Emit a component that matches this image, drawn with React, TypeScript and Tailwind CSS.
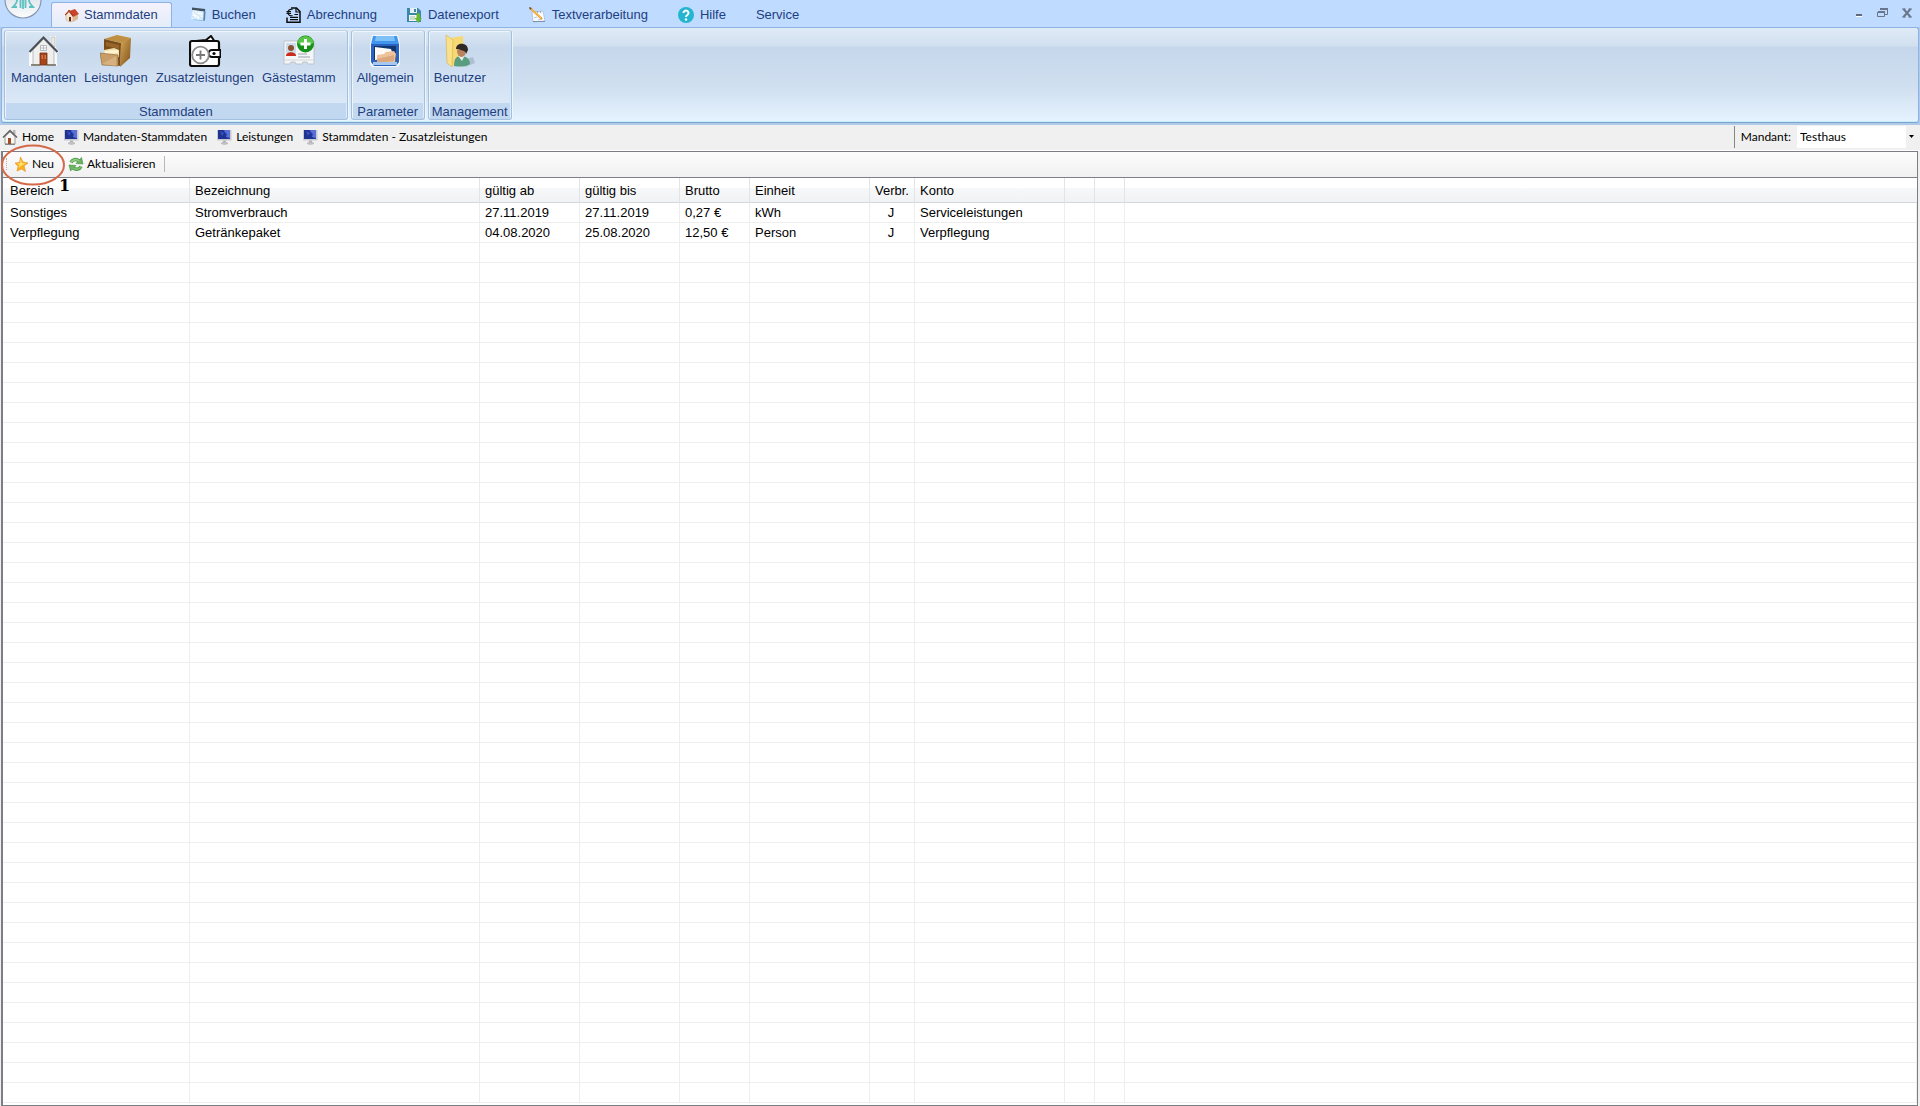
import { useState, type ReactNode } from "react";

/* ===================== TYPES ===================== */
interface Leistung {
  bereich: string;
  bezeichnung: string;
  ab: string;
  bis: string;
  brutto: string;
  einheit: string;
  verbr: string;
  konto: string;
}

interface RibbonItem {
  label: string;
  icon: ReactNode;
}

/* ===================== DATA ===================== */
const ROWS: Leistung[] = [
  { bereich: "Sonstiges", bezeichnung: "Stromverbrauch", ab: "27.11.2019", bis: "27.11.2019", brutto: "0,27 €", einheit: "kWh", verbr: "J", konto: "Serviceleistungen" },
  { bereich: "Verpflegung", bezeichnung: "Getränkepaket", ab: "04.08.2020", bis: "25.08.2020", brutto: "12,50 €", einheit: "Person", verbr: "J", konto: "Verpflegung" },
];

const COLUMNS = [
  { label: "Bereich", width: "w-[187px]" },
  { label: "Bezeichnung", width: "w-[290px]" },
  { label: "gültig ab", width: "w-[100px]" },
  { label: "gültig bis", width: "w-[100px]" },
  { label: "Brutto", width: "w-[70px]" },
  { label: "Einheit", width: "w-[120px]" },
  { label: "Verbr.", width: "w-[45px]" },
  { label: "Konto", width: "w-[150px]" },
  { label: "", width: "w-[30px]" },
  { label: "", width: "w-[30px]" },
];

const EMPTY_ROWS = 43;

/* ===================== SMALL ICONS ===================== */
const TabHouse = () => (
  <svg width="15" height="15" viewBox="0 0 15 15">
    <path d="M1 7 4 4l4 4v5l-3 1-4-2z" fill="#f3e3cf" stroke="#c9a98a" strokeWidth=".6" />
    <path d="m8 8 5-2v5l-5 3z" fill="#dcb896" />
    <path d="M4 3 10 1l4 5-6 3z" fill="#c8452b" />
    <path d="M0 7 4 3l4 5" fill="none" stroke="#a83a22" strokeWidth="1.2" />
    <path d="M3 2h2v2H3z" fill="#b0522f" />
    <path d="M4 9h2v4.500L4 13z" fill="#5a2b16" />
  </svg>
);

const TabBook = () => (
  <svg width="15" height="15" viewBox="0 0 15 15">
    <path d="m2 1.500 12.500.5-1 12-11-1z" fill="#8dbbe0" />
    <path d="M1 .500 14 2v2.500L1 3z" fill="#44525f" />
    <path d="m1.500 3 11 1.500-.5 8.500L0 12z" fill="#dff0fb" />
    <path d="m2 6 10 1M1.500 8.500l10 1M4.500 4 3.500 12M8 5 7 12.500" stroke="#fff" strokeWidth="1" />
    <path d="m3 5 9 7M1 9l5 4" stroke="#b3d8ef" strokeWidth=".8" />
    <path d="m13 4 1.500.500-.500 9h-1.500z" fill="#5d83ad" />
  </svg>
);

const TabInvoice = () => (
  <svg width="15" height="16" viewBox="0 0 15 16" fill="none" stroke="#0b0b0b">
    <path d="M1 10.500v4.800h13V4.500L10.500 1H5" strokeWidth="1.500" />
    <path d="M10 1v4h4" strokeWidth="1.200" />
    <path d="M6.500 2.500C3 1.500 2 4 2 5.500s1 4 4.500 3M.500 4.700h4.500M.500 6.500h4.500" strokeWidth="1.200" />
    <path d="M8.500 7.500H12M4 10.300h8M4 12.600h8" strokeWidth="1.200" />
  </svg>
);

const TabSave = () => (
  <svg width="15" height="16" viewBox="0 0 15 16">
    <path d="M0 1h11l3 3v11H0z" fill="#3c86a8" />
    <path d="M3 1h7v5H3z" fill="#e4f1f5" />
    <path d="M7 2h2v3H7z" fill="#3c86a8" />
    <path d="M2 8h9v6H2z" fill="#f4f8f4" />
    <path d="M3 10h5M3 12h5" stroke="#9fc3a5" />
    <path d="M9.500 6.500h3.500v4.500h2L11.300 16 7.500 11h2z" fill="#66b82e" />
  </svg>
);

const TabPen = () => (
  <svg width="17" height="16" viewBox="0 0 17 16">
    <path d="m3 5 11-1 2 10-12 1z" fill="#f8fbff" stroke="#a9b8cc" strokeWidth=".7" />
    <path d="M4 14.500h12" stroke="#7f8fa5" />
    <path d="m5 4 1 2m2-2 1 2m2-2 1 2" stroke="#7f93b0" strokeWidth=".9" />
    <path d="m5 11 3-1m1 3 4-1" stroke="#a8c0dc" strokeWidth=".9" />
    <path d="m1 1 12 11" stroke="#e99a25" strokeWidth="2" />
    <path d="m1 1 11 10" stroke="#ffd267" strokeWidth=".8" />
    <path d="m0 0 3 1-2 2z" fill="#6a5238" />
  </svg>
);

const TabHelp = () => (
  <svg width="16" height="16" viewBox="0 0 16 16">
    <circle cx="8" cy="8" r="8" fill="#24b5d1" />
    <path d="M5.500 6a2.500 2.400 0 1 1 3.800 2C8.300 8.600 8 9 8 10" fill="none" stroke="#fff" strokeWidth="2" />
    <circle cx="8" cy="12.500" r="1.200" fill="#fff" />
  </svg>
);

const HomeIcon = () => (
  <svg width="16" height="16" viewBox="0 0 16 16">
    <path d="M3 7.500 8 3l5 4.500V15H3z" fill="#f6f6f4" stroke="#8b8b89" strokeWidth=".8" />
    <path d="M11.500 1.500H13V5l-1.500-1z" fill="#ddd" stroke="#888" strokeWidth=".6" />
    <path d="M1 8.500 8 1.500l7 7" fill="none" stroke="#5f6060" strokeWidth="1.500" />
    <path d="M6 9h3v6H6z" fill="#a04b20" />
    <path d="M3 15.300h10" stroke="#777" />
  </svg>
);

const MonitorIcon = () => (
  <svg width="15" height="16" viewBox="0 0 15 16">
    <path d="M0 1h14.500v10.500H0z" fill="#c9cbd3" />
    <path d="M1 1h12v9H1z" fill="#2a3fae" />
    <path d="M1 1h5l5 9H1z" fill="#1f3392" />
    <path d="m7 2 3 3-1 3 4 1V1H8z" fill="#5a70d4" />
    <path d="m3 2 4 2-2 3z" fill="#3d52bd" />
    <path d="M6 11.500h3v2H6z" fill="#b5b5b5" />
    <path d="M4 14.300c1-1.500 6-1.500 7 0-1 1.500-6 1.500-7 0z" fill="#c4c4c4" stroke="#a8a8a8" strokeWidth=".5" />
  </svg>
);

const StarIcon = () => (
  <svg width="13" height="15" viewBox="0 0 13 15">
    <path d="M5.500 0 8 5l5 1-4 3 1.500 5.500-4-2.500L2 14l1-4.700L0 6l4.500-.5z" fill="#f8b21d" stroke="#e58b12" strokeWidth=".6" />
    <path d="M5.700 2 7 6l4 .5L7.500 8 3 11l1.500-3L2 6.500l3-.3z" fill="#ffe06a" />
  </svg>
);

const RefreshIcon = () => (
  <svg width="16" height="16" viewBox="0 0 16 16">
    <path d="M3 6.500C4.500 3.500 8 2.500 11 5" fill="none" stroke="#3f8f3c" strokeWidth="3.400" />
    <path d="M13.500 1.500 15 8l-7-.5z" fill="#6bb35f" stroke="#3f8f3c" strokeWidth=".6" />
    <path d="M3 6.500C4.500 3.500 8 2.500 11 5" fill="none" stroke="#8fce84" strokeWidth="2" />
    <path d="M13 10.500c-1.500 3-5 3.500-8 1.500" fill="none" stroke="#3f8f3c" strokeWidth="3.400" />
    <path d="M2.500 15 1 9l7 .5z" fill="#6bb35f" stroke="#3f8f3c" strokeWidth=".6" />
    <path d="M13 10.500c-1.500 3-5 3.500-8 1.500" fill="none" stroke="#7cc070" strokeWidth="2" />
  </svg>
);

/* ===================== RIBBON ICONS ===================== */
const HouseIcon = () => (
  <svg width="32" height="32" viewBox="0 0 32 32">
    <path d="M1 31V17L16 2l6 5V1h6v12l3 4-2 1v13z" fill="#fff" opacity=".85" />
    <path d="M5 15 15.500 4 26 15v15H5z" fill="#efefed" stroke="#a5a6a6" strokeWidth=".7" />
    <path d="M23 2h4v10l-4-4z" fill="#e8e8e6" stroke="#b0b0b0" strokeWidth=".6" />
    <path d="M1.500 17 15.500 2.500 29.500 17" fill="none" stroke="#4a4f57" strokeWidth="2" />
    <path d="M12.500 10.500h6v5h-6z" fill="#fbfbfb" stroke="#a6abb0" strokeWidth=".8" />
    <path d="M15.500 10.500v5M12.500 13h6" stroke="#a6abb0" strokeWidth=".7" />
    <path d="M12 18h7v12h-7z" fill="#a8441a" stroke="#6e3016" strokeWidth=".8" />
    <path d="M13.500 20h1.500v4h-1.500zM16.500 20H18v4h-1.500z" fill="#d2774a" />
    <path d="M3 30h9M19 30h9" stroke="#6f6a58" strokeWidth="1.500" />
  </svg>
);

const CabinetIcon = () => (
  <svg width="32" height="32" viewBox="0 0 32 32">
    <defs>
      <linearGradient id="cab" x1="0" y1="0" x2="1" y2="1">
        <stop offset="0" stopColor="#d8a859" />
        <stop offset="1" stopColor="#7d4f16" />
      </linearGradient>
    </defs>
    <path d="M4 4 17 0l14 3-9 5z" fill="#c08f42" />
    <path d="m21 8 10-5-1 20-10 9z" fill="url(#cab)" />
    <path d="m4 4 17 4-1 23-16-3z" fill="#7a4d18" />
    <path d="m6 7 13 3v4L6 11z" fill="#98662a" />
    <path d="m4 15 10-2 5 2v7L4 19z" fill="#f0e0ad" />
    <path d="m5 16 13-1v3l-13 1z" fill="#fff5d2" />
    <path d="m0 18 18 2v11L2 30z" fill="#c99d68" stroke="#8f6833" strokeWidth=".6" />
    <path d="m2 29 14-8v10z" fill="#e0bd8f" opacity=".6" />
  </svg>
);

const WalletIcon = () => (
  <svg width="32" height="32" viewBox="0 0 32 32" fill="none">
    <path d="m7 6 10-1 5-4 4 6" fill="#fff" stroke="#0d0d0d" strokeWidth="2" />
    <rect x="1" y="6" width="29" height="25" rx="2" fill="#fff" stroke="#0d0d0d" strokeWidth="2.200" />
    <path d="M26 15h-3a3.500 3.500 0 0 0 0 7h8.500v-7z" fill="#fff" stroke="#0d0d0d" strokeWidth="2" />
    <circle cx="25" cy="18.500" r="1.600" fill="#0d0d0d" />
    <circle cx="11.500" cy="20" r="8.300" fill="#fff" stroke="#8e8e8e" strokeWidth="1.800" />
    <path d="M11.500 15.500v9M7 20h9" stroke="#777" strokeWidth="1.800" />
  </svg>
);

const GuestIcon = () => (
  <svg width="32" height="32" viewBox="0 0 32 32">
    <path d="M1 6h30v23h-6l-1-2h-4l-1 2h-6l-1-2H8l-1 2H1z" fill="#f4f5f6" stroke="#b6bcc3" strokeWidth=".8" />
    <path d="M1 25h30" stroke="#d2d6da" />
    <path d="M3 8h10v13H3z" fill="#cbdcec" />
    <path d="M3 21c0-5 10-5 10 0z" fill="#cc2b1b" />
    <circle cx="8" cy="13" r="3" fill="#8f4f31" />
    <path d="M15 19h9M15 22h12" stroke="#b9bfc6" strokeWidth="1.500" />
    <circle cx="22.500" cy="9" r="8.500" fill="#159019" />
    <path d="M14.500 8c1-9 15-9 16 0-5 3-11 3-16 0z" fill="#58c748" />
    <path d="M22.500 4v10M17.500 9h10" stroke="#fff" strokeWidth="3" />
  </svg>
);

const DrawerIcon = () => (
  <svg width="32" height="32" viewBox="0 0 32 32">
    <path d="m1 9 2-9h26l2 9v20l-2 3H3l-2-3z" fill="#f4f8fd" />
    <path d="M4 1h24l2 8H2z" fill="#4096ee" />
    <path d="M7 1h18l1 5H6z" fill="#7fc0f7" />
    <path d="M2 9h28v18l-3 4H5l-3-4z" fill="#2a63bf" />
    <path d="M5 11h22v14H5z" fill="#12366f" />
    <path d="m6 12 16 2 3 9-19 2z" fill="#fcfbf8" />
    <path d="m8 20 7-1 2-2 8-1 2 3-1 8H8z" fill="#eec39c" />
    <path d="m8 24 17-4v6l-17 2z" fill="#dba77c" />
    <path d="M4 27h24v3H4z" fill="#a8c8ef" />
  </svg>
);

const UserFolderIcon = () => (
  <svg width="32" height="32" viewBox="0 0 32 32">
    <path d="m18 25 11-3 2 6-10 4z" fill="#8594a5" opacity=".4" />
    <path d="m6 3 13-2 1 27-12 3z" fill="#f6d974" />
    <path d="m2 0 7 5-1 27-5-4z" fill="#f9e08a" stroke="#d0a83c" strokeWidth=".5" />
    <path d="M10 31c0-8 3-10 7-10 6 0 9 4 9 8-4 3-11 3-16 2z" fill="#5a9c7e" />
    <path d="m14 21 4 5 3-6z" fill="#e8efe9" />
    <ellipse cx="17.500" cy="16" rx="4.500" ry="6" fill="#bb835b" />
    <path d="M12 14c0-7 12-7 12 1l-2 4c0-4-5-3-7-5z" fill="#2f2925" />
  </svg>
);

const AppLogo = () => (
  <svg width="40" height="19" viewBox="0 0 40 19">
    <defs>
      <linearGradient id="orb" x1="0" y1="0" x2="0" y2="1">
        <stop offset="0" stopColor="#ccd6e0" />
        <stop offset="1" stopColor="#fbfcfd" />
      </linearGradient>
    </defs>
    <circle cx="20" cy="0" r="18" fill="url(#orb)" stroke="#8698b2" strokeWidth="1.200" />
    <path d="M14 0c0 3-2 5-4 7h4M26 0c0 3 2 5 4 7h-4M17.500 0v8M22.500 0v8M20 0v9" fill="none" stroke="#5fc0c2" strokeWidth="1.800" />
  </svg>
);

/* ===================== NAVIGATION ===================== */
const TABS: RibbonItem[] = [
  { label: "Buchen", icon: <TabBook /> },
  { label: "Abrechnung", icon: <TabInvoice /> },
  { label: "Datenexport", icon: <TabSave /> },
  { label: "Textverarbeitung", icon: <TabPen /> },
  { label: "Hilfe", icon: <TabHelp /> },
  { label: "Service", icon: null },
];

const GROUPS: { title: string; items: RibbonItem[]; pad: string }[] = [
  {
    title: "Stammdaten",
    pad: "pl-0.5 pr-[7px]",
    items: [
      { label: "Mandanten", icon: <HouseIcon /> },
      { label: "Leistungen", icon: <CabinetIcon /> },
      { label: "Zusatzleistungen", icon: <WalletIcon /> },
      { label: "Gästestamm", icon: <GuestIcon /> },
    ],
  },
  { title: "Parameter", pad: "pl-px pr-1.5", items: [{ label: "Allgemein", icon: <DrawerIcon /> }] },
  { title: "Management", pad: "pl-px pr-1", items: [{ label: "Benutzer", icon: <UserFolderIcon /> }] },
];

const CRUMBS: RibbonItem[] = [
  { label: "Home", icon: <HomeIcon /> },
  { label: "Mandaten-Stammdaten", icon: <MonitorIcon /> },
  { label: "Leistungen", icon: <MonitorIcon /> },
  { label: "Stammdaten - Zusatzleistungen", icon: <MonitorIcon /> },
];

const RibbonGroup = ({ title, items, pad }: { title: string; items: RibbonItem[]; pad: string }) => (
  <section className="flex flex-col rounded-[3px] border border-[#a3c0de] border-t-[#c3d5e9] bg-linear-to-b from-[#dbe7f3] from-0% via-[#c8d9ed] via-20% to-[#dfecfa] to-100% shadow-[inset_1px_1px_0_#edf4fb,1px_1px_0_#eef6fd]">
    <div className={`flex flex-1 items-start pt-1 ${pad}`}>
      {items.map((item) => (
        <button key={item.label} type="button" className="flex flex-col items-center gap-[3px] px-1">
          {item.icon}
          <span className="leading-4">{item.label}</span>
        </button>
      ))}
    </div>
    <h2 className="mx-px h-4 bg-[#c1d8f0] px-0.5 text-center leading-[18px]">{title}</h2>
  </section>
);

/* ===================== COMPONENT ===================== */
export default function App() {
  const [mandant, setMandant] = useState("Testhaus");

  return (
    <div className="flex min-h-screen flex-col bg-[#f0f0f0] font-['Liberation_Sans',Arial,sans-serif] text-[13px] text-black">
      {/* Tabs */}
      <header className="flex h-[27px] items-end bg-[#bfdbff] text-[#1e3f7f]">
        <button type="button" aria-label="Menü" className="mx-[3px] self-start">
          <AppLogo />
        </button>
        <nav className="flex flex-1 items-end">
          <button type="button" className="ml-[5px] flex h-[25px] items-center gap-1 rounded-t-[3px] border border-b-0 border-[#8db2e3] bg-linear-to-b from-[#f5f2fc] to-[#e4edf9] px-[13px]">
            <TabHouse />
            Stammdaten
          </button>
          <div className="ml-1 flex">
            {TABS.map((tab) => (
              <button key={tab.label} type="button" className="flex h-[25px] items-center gap-1.5 px-[15px]">
                {tab.icon}
                {tab.label}
              </button>
            ))}
          </div>
        </nav>
        <div className="flex items-center gap-[14px] self-start pt-2 pr-2">
          <button type="button" aria-label="Minimieren">
            <svg width="8" height="10" viewBox="0 0 8 10">
              <path d="M1 8.500h6" stroke="#fff" />
              <path d="M1 7h6" stroke="#606a78" strokeWidth="2" />
            </svg>
          </button>
          <button type="button" aria-label="Wiederherstellen">
            <svg width="11" height="10" viewBox="0 0 11 10" fill="none" stroke="#69768a">
              <path d="M3 1h8M1 4h7" strokeWidth="2" />
              <path d="M10.500 1v5.500H8M.5 4v4.500h7V4" />
            </svg>
          </button>
          <button type="button" aria-label="Schließen">
            <svg width="10" height="10" viewBox="0 0 10 10" stroke="#69768a">
              <path d="m1.500 1 7 8m0-8-7 8" strokeWidth="2" />
              <path d="M0 1h3.500M6.500 1H10M0 9h3.500M6.500 9H10" />
            </svg>
          </button>
        </div>
      </header>

      {/* Ribbon */}
      <div className="bg-[#afc9eb] px-px pb-0.5">
        <div className="flex h-[96px] gap-[3px] rounded-[3px] border border-[#8db2e3] border-b-[#7ba5cf] bg-[linear-gradient(#dfebf6_0px,#d1dfef_18px,#c6d7ed_19px,#cfdfef_58px,#e5f2ff_93px)] px-0.5 py-0.5 text-[#1e3f7f] shadow-[inset_0_-1px_0_#c5eef8]">
          {GROUPS.map((group) => (
            <RibbonGroup key={group.title} {...group} />
          ))}
        </div>
      </div>

      {/* Breadcrumb */}
      <div className="flex h-[26px] items-center border-b border-white pb-0.5 font-['Lato','Segoe_UI',sans-serif] text-[12px]">
        <nav className="flex flex-1 items-center gap-[10px] pl-0.5">
          {CRUMBS.map((crumb) => (
            <a key={crumb.label} href="#" className="flex items-center gap-1 whitespace-nowrap">
              {crumb.icon}
              {crumb.label}
            </a>
          ))}
        </nav>
        <div className="flex h-[22px] items-center border-l border-[#858585] pr-[3px]">
          <label htmlFor="mandant" className="px-1.5">Mandant:</label>
          <div className="relative flex h-[22px] w-[120px] bg-white">
            <select
              id="mandant"
              value={mandant}
              onChange={(e) => setMandant(e.target.value)}
              className="w-full appearance-none bg-transparent pl-[3px]"
            >
              <option>Testhaus</option>
            </select>
            <span className="pointer-events-none absolute inset-y-0 right-0 flex w-[11px] items-center justify-center bg-[#f0f0f0]">
              <svg width="5" height="3" viewBox="0 0 5 3">
                <path d="M0 0h5L2.500 3z" />
              </svg>
            </span>
          </div>
        </div>
      </div>

      {/* Content */}
      <main className="mr-0.5 ml-px flex flex-1 flex-col border-t border-r border-b border-l-2 border-[#7b7e84]">
        <div className="relative flex h-[26px] items-center border-b border-[#7f8085] bg-linear-to-b from-[#fdfdfd] to-[#f0f0f0] pb-px font-['Lato','Segoe_UI',sans-serif] text-[12px]">
          <span className="ml-[3px] h-3 border-l border-dotted border-[#b0b0b0]" />
          <button type="button" className="ml-2 flex items-center gap-1">
            <StarIcon />
            Neu
          </button>
          <button type="button" className="ml-[14px] flex items-center gap-[3px]">
            <RefreshIcon />
            Aktualisieren
          </button>
          <span className="ml-[9px] h-4 border-l border-[#b8b8b8]" />

          {/* Annotation */}
          <svg className="pointer-events-none absolute -top-2 -left-1 z-10" width="66" height="42" viewBox="0 0 66 42" fill="none">
            <ellipse cx="34" cy="21" rx="31" ry="19.500" stroke="#d4694a" strokeWidth="2" />
          </svg>
          <span className="pointer-events-none absolute top-6 left-14 z-10 font-['DejaVu_Serif',serif] text-[16px] leading-5 font-bold">1</span>
        </div>

        <div className="flex-1 bg-white">
          <table className="w-full table-fixed border-separate border-spacing-0">
            <colgroup>
              {COLUMNS.map((col, i) => (
                <col key={i} className={col.width} />
              ))}
              <col />
            </colgroup>
            <thead>
              <tr>
                {COLUMNS.map((col, i) => (
                  <th
                    key={i}
                    className="h-[25px] border-r border-b border-r-[#e2e4e8] border-b-[#d5d7da] bg-linear-to-b from-white from-40% via-[#f7f8fa] via-40% to-[#f1f2f4] p-0 pt-0.5 pl-[5px] text-left leading-4 font-normal whitespace-nowrap first:pl-[7px]"
                  >
                    {col.label}
                  </th>
                ))}
                <th className="border-b border-[#d5d7da] bg-linear-to-b from-white from-40% via-[#f7f8fa] via-40% to-[#f1f2f4] p-0" />
              </tr>
            </thead>
            <tbody className="[&_td]:h-5 [&_td]:border-r [&_td]:border-b [&_td]:border-[#eeeeee] [&_td]:p-0 [&_td]:pl-[5px] [&_td]:leading-4">
              {ROWS.map((row) => (
                <tr key={row.bereich}>
                  <td className="pl-[7px]!">{row.bereich}</td>
                  <td>{row.bezeichnung}</td>
                  <td>{row.ab}</td>
                  <td>{row.bis}</td>
                  <td>{row.brutto}</td>
                  <td>{row.einheit}</td>
                  <td className="px-0! pr-0.5! text-center">{row.verbr}</td>
                  <td>{row.konto}</td>
                  <td />
                  <td />
                  <td />
                </tr>
              ))}
              {Array.from({ length: EMPTY_ROWS }, (_, r) => (
                <tr key={r}>
                  {Array.from({ length: 11 }, (_, c) => (
                    <td key={c} />
                  ))}
                </tr>
              ))}
            </tbody>
          </table>
        </div>
      </main>
    </div>
  );
}
